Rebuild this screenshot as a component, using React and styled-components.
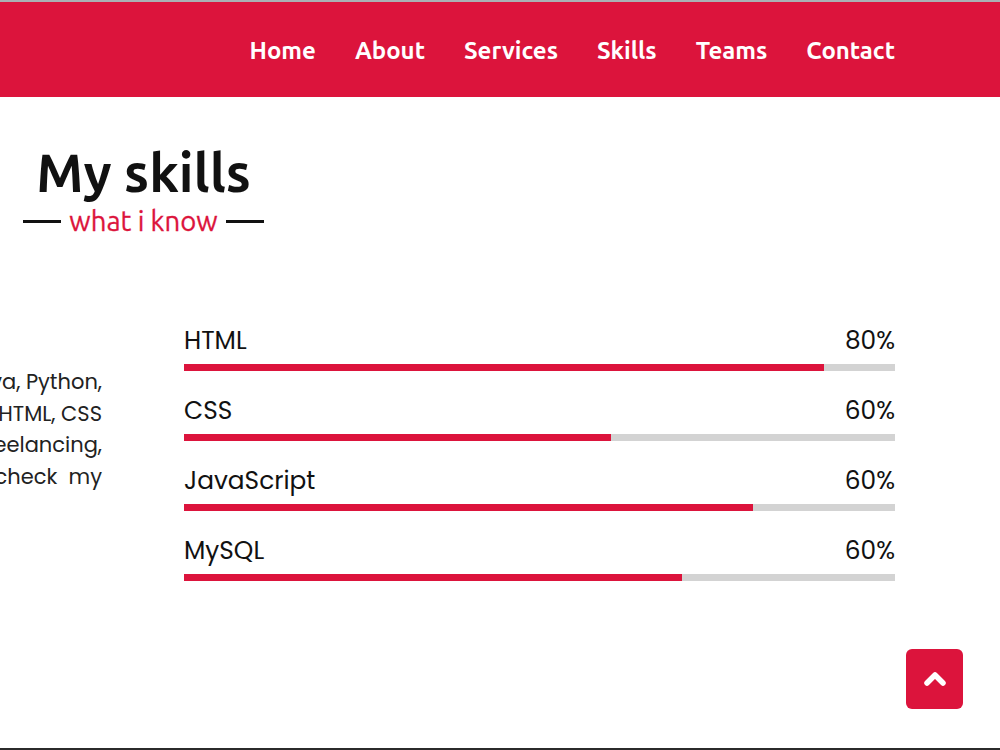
import React from "react";
import styled, { createGlobalStyle } from "styled-components";

const GlobalStyle = createGlobalStyle`
  * {
    margin: 0;
    padding: 0;
    box-sizing: border-box;
  }
  html, body {
    width: 100%;
    height: 100%;
    overflow: hidden;
    background: #fff;
  }
`;

const Page = styled.div`
  height: 100vh;
  border-top: 2px solid #aab1b4;
  border-bottom: 2px solid #2b2b2b;
  overflow: hidden;
`;

const Navbar = styled.nav`
  height: 95px;
  background: crimson;
  display: flex;
  align-items: center;
  justify-content: flex-end;
  padding-right: 105px;
  padding-top: 2px;
`;

const Menu = styled.ul`
  list-style: none;
  display: flex;
  gap: 39px;
`;

const MenuLink = styled.a`
  font-family: "Ubuntu", "Open Sans", sans-serif;
  font-weight: 600;
  font-size: 24px;
  color: #fff;
  text-decoration: none;
`;

const Section = styled.section`
  padding-top: 45px;
`;

const TitleBlock = styled.div`
  width: 287px;
  display: flex;
  flex-direction: column;
  align-items: center;
`;

const Title = styled.h2`
  font-family: "Ubuntu", "Open Sans", sans-serif;
  font-weight: 600;
  font-size: 53px;
  line-height: 62px;
  color: #111;
`;

const SubTitle = styled.div`
  display: flex;
  align-items: center;
  gap: 8px;
  font-family: "Ubuntu", "Open Sans", sans-serif;
  font-weight: 400;
  font-size: 27.5px;
  line-height: 34px;
  color: crimson;
  -webkit-text-stroke: 0.3px crimson;

  &::before,
  &::after {
    content: "";
    width: 38px;
    height: 3px;
    background: #111;
  }
`;

const Content = styled.div`
  display: flex;
  gap: 82px;
  margin-top: 88px;
`;

const About = styled.div`
  width: 480px;
  flex-shrink: 0;
  margin-left: -378px;
  padding-top: 40px;
`;

const Line = styled.span`
  display: block;
  font-family: "Poppins", "DejaVu Sans", sans-serif;
  font-size: 21px;
  line-height: 31.6px;
  color: #222;
  text-align: right;
  white-space: pre;
`;

const Skills = styled.div`
  width: 711px;
  display: flex;
  flex-direction: column;
  gap: 25px;
`;

const Skill = styled.div``;

const SkillHead = styled.div`
  display: flex;
  justify-content: space-between;
  font-family: "Poppins", "DejaVu Sans", sans-serif;
  font-size: 24.8px;
  line-height: 30px;
  color: #111;
  margin-bottom: 8px;
`;

const Track = styled.div`
  height: 7px;
  background: #d3d3d3;
`;

const Fill = styled.div`
  height: 100%;
  background: crimson;
`;

const UpButton = styled.a`
  position: fixed;
  right: 37px;
  bottom: 41px;
  width: 57px;
  height: 60px;
  border-radius: 6px;
  background: crimson;
  display: flex;
  align-items: center;
  justify-content: center;
`;

const links = ["Home", "About", "Services", "Skills", "Teams", "Contact"];

const skills = [
  { name: "HTML", label: "80%", fill: 90 },
  { name: "CSS", label: "60%", fill: 60 },
  { name: "JavaScript", label: "60%", fill: 80 },
  { name: "MySQL", label: "60%", fill: 70 },
];

const lines = [
  "I know C, C++, Java, Python,",
  "JavaScript, PHP, HTML, CSS",
  "experience in freelancing,",
  "you want, check  my",
];

export default function App() {
  return (
    <>
      <GlobalStyle />
      <Page>
        <Navbar>
          <Menu>
            {links.map((l) => (
              <li key={l}>
                <MenuLink href="#">{l}</MenuLink>
              </li>
            ))}
          </Menu>
        </Navbar>
        <Section>
          <TitleBlock>
            <Title>My skills</Title>
            <SubTitle>what i know</SubTitle>
          </TitleBlock>
          <Content>
            <About>
              {lines.map((t) => (
                <Line key={t}>{t}</Line>
              ))}
            </About>
            <Skills>
              {skills.map((s) => (
                <Skill key={s.name}>
                  <SkillHead>
                    <span>{s.name}</span>
                    <span>{s.label}</span>
                  </SkillHead>
                  <Track>
                    <Fill style={{ width: `${s.fill}%` }} />
                  </Track>
                </Skill>
              ))}
            </Skills>
          </Content>
        </Section>
        <UpButton href="#">
          <svg width="26" height="18" viewBox="0 0 26 18">
            <path
              d="M5 13 L13 5 L21 13"
              fill="none"
              stroke="#fff"
              strokeWidth="5.5"
              strokeLinecap="round"
              strokeLinejoin="round"
            />
          </svg>
        </UpButton>
      </Page>
    </>
  );
}
